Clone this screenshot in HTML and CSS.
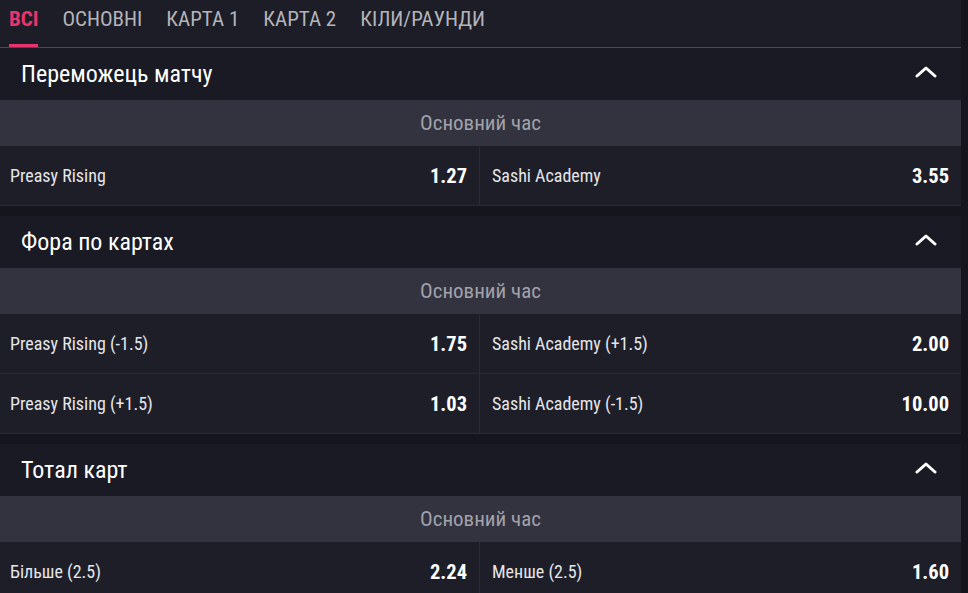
FILE: index.html
```html
<!DOCTYPE html>
<html lang="uk">
<head>
<meta charset="UTF-8">
<meta name="viewport" content="width=device-width, initial-scale=1.0">
<title>Ставки на матч</title>
<link rel="stylesheet" href="styles.css">
</head>
<body>

<div class="page">
    <nav class="tabs">
        <a class="tab active">Всі</a>
        <a class="tab">Основні</a>
        <a class="tab">Карта 1</a>
        <a class="tab">Карта 2</a>
        <a class="tab">Кіли/Раунди</a>
    </nav>

    <section class="market">
        <div class="market-head">
            <h2>Переможець матчу</h2>
            <svg class="chevron" width="22" height="13" viewBox="0 0 22 13"><polyline points="2,11 11,3 20,11" fill="none" stroke="#fff" stroke-width="3" stroke-linecap="round" stroke-linejoin="round"/></svg>
        </div>
        <div class="period">Основний час</div>
        <div class="row">
            <div class="cell"><span class="name">Preasy Rising</span><span class="odd">1.27</span></div>
            <div class="cell"><span class="name">Sashi Academy</span><span class="odd">3.55</span></div>
        </div>
    </section>

    <section class="market">
        <div class="market-head">
            <h2>Фора по картах</h2>
            <svg class="chevron" width="22" height="13" viewBox="0 0 22 13"><polyline points="2,11 11,3 20,11" fill="none" stroke="#fff" stroke-width="3" stroke-linecap="round" stroke-linejoin="round"/></svg>
        </div>
        <div class="period">Основний час</div>
        <div class="row">
            <div class="cell"><span class="name">Preasy Rising (-1.5)</span><span class="odd">1.75</span></div>
            <div class="cell"><span class="name">Sashi Academy (+1.5)</span><span class="odd">2.00</span></div>
        </div>
        <div class="row">
            <div class="cell"><span class="name">Preasy Rising (+1.5)</span><span class="odd">1.03</span></div>
            <div class="cell"><span class="name">Sashi Academy (-1.5)</span><span class="odd">10.00</span></div>
        </div>
    </section>

    <section class="market">
        <div class="market-head">
            <h2>Тотал карт</h2>
            <svg class="chevron" width="22" height="13" viewBox="0 0 22 13"><polyline points="2,11 11,3 20,11" fill="none" stroke="#fff" stroke-width="3" stroke-linecap="round" stroke-linejoin="round"/></svg>
        </div>
        <div class="period">Основний час</div>
        <div class="row">
            <div class="cell"><span class="name">Більше (2.5)</span><span class="odd">2.24</span></div>
            <div class="cell"><span class="name">Менше (2.5)</span><span class="odd">1.60</span></div>
        </div>
    </section>
</div>

</body>
</html>
```

FILE: styles.css
```css
body {
    margin: 0;
    background-color: #15161d;
    font-family: "Roboto Condensed", "Liberation Sans Narrow", Roboto, sans-serif;
    color: #e6e6ea;
}
.page {
    width: 961px;
}
.tabs {
    display: flex;
    gap: 24px;
    height: 47px;
    padding-left: 9px;
    background-color: #1c1d26;
    border-bottom: 1px solid #4a4b55;
}
.tab {
    display: flex;
    align-items: center;
    height: 38px;
    padding-bottom: 6px;
    font-size: 21px;
    text-transform: uppercase;
    color: #b4b4bb;
    border-bottom: 3px solid transparent;
}
.tab.active {
    color: #e8336f;
    font-weight: bold;
    border-bottom-color: #e8336f;
}
.market {
    margin-bottom: 10px;
}
.market-head {
    display: flex;
    align-items: center;
    justify-content: space-between;
    height: 52px;
    padding: 0 24px 0 21px;
    background-color: #191a23;
}
.market-head h2 {
    margin: 0;
    font-size: 24px;
    font-weight: normal;
    color: #fff;
}
.chevron {
    margin-bottom: 5px;
}
.period {
    display: flex;
    align-items: center;
    justify-content: center;
    height: 46px;
    background-color: #32333e;
    color: #a2a2aa;
    font-size: 21px;
}
.row {
    display: flex;
    height: 60px;
    box-sizing: border-box;
    border-bottom: 1px solid #2a2b35;
    background-color: #1d1e28;
}
.cell {
    flex: 1;
    display: flex;
    align-items: center;
    justify-content: space-between;
    padding: 0 12px 0 12px;
}
.cell:first-child {
    padding-left: 10px;
    border-right: 1px solid #2a2b35;
}
.name {
    font-size: 18px;
}
.odd {
    font-size: 20.5px;
    font-weight: bold;
    color: #fff;
}
```
